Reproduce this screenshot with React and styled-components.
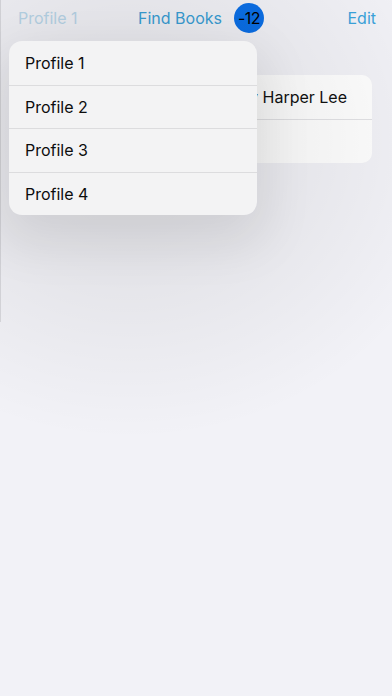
import React from "react";
import styled, { createGlobalStyle } from "styled-components";

const GlobalStyle = createGlobalStyle`
  html, body { margin: 0; padding: 0; background: #f2f2f7; }
  body { font-family: Inter, "Noto Sans", "Liberation Sans", sans-serif; -webkit-font-smoothing: antialiased; }
  * { box-sizing: border-box; }
`;

const Screen = styled.div`
  position: relative;
  width: 392px;
  height: 696px;
  overflow: hidden;
  background: #f2f2f7;
`;

const Sheet = styled.div`
  height: 322px;
  border-left: 1px solid #d9d9de;
`;

const NavBar = styled.div`
  display: grid;
  grid-template-columns: 1fr auto 1fr;
  align-items: center;
  height: 36px;
  padding: 0 16px 0 17px;
  font-size: 16px;
`;

const NavButton = styled.span`
  color: ${(p) => (p.$dim ? "#b9d6e9" : "#3aa3dc")};
  justify-self: ${(p) => (p.$end ? "end" : "start")};
`;

const TitleGroup = styled.div`
  display: flex;
  align-items: center;
  gap: 12px;
  padding-left: 8px;
`;

const Title = styled.span`
  color: #3a9fd6;
`;

const Badge = styled.span`
  width: 30px;
  height: 30px;
  border-radius: 50%;
  background: #0b6fe7;
  color: #000;
  display: flex;
  align-items: center;
  justify-content: center;
  font-size: 16px;
  letter-spacing: -0.5px;
`;

const Card = styled.div`
  margin: 39px 20px 0;
  background: #fff;
  border-radius: 10px;
  overflow: hidden;
`;

const Row = styled.div`
  height: 44px;
  display: flex;
  align-items: center;
  justify-content: flex-end;
  padding: 0 25px 0 16px;
  font-size: 16px;
  color: #111;
  white-space: nowrap;
  & + & { border-top: 1px solid #e3e3e6; }
`;

const Scrim = styled.div`
  position: absolute;
  inset: 0;
  pointer-events: none;
  background: radial-gradient(ellipse 340px 300px at 130px 140px, rgba(0,0,0,0.1) 0%, rgba(0,0,0,0.05) 50%, rgba(0,0,0,0) 100%);
`;

const Menu = styled.div`
  position: absolute;
  left: 9px;
  top: 41px;
  width: 248px;
  background: #f3f3f4;
  border-radius: 13px;
  overflow: hidden;
  box-shadow: 0 20px 50px 10px rgba(0, 0, 0, 0.08);
`;

const MenuItem = styled.div`
  height: 43.5px;
  display: flex;
  align-items: center;
  padding: 0 16px;
  font-size: 16px;
  color: #0d0d0d;
  & + & { border-top: 1px solid #dcdcde; }
`;

export default function App() {
  return (
    <>
      <GlobalStyle />
      <Screen>
        <Sheet>
          <NavBar>
            <NavButton $dim>Profile 1</NavButton>
            <TitleGroup>
              <Title>Find Books</Title>
              <Badge>-12</Badge>
            </TitleGroup>
            <NavButton $end>Edit</NavButton>
          </NavBar>
          <Card>
            <Row>To Kill a Mockingbird by Harper Lee</Row>
            <Row />
          </Card>
        </Sheet>
        <Scrim />
        <Menu>
          {["Profile 1", "Profile 2", "Profile 3", "Profile 4"].map((p) => (
            <MenuItem key={p}>{p}</MenuItem>
          ))}
        </Menu>
      </Screen>
    </>
  );
}
